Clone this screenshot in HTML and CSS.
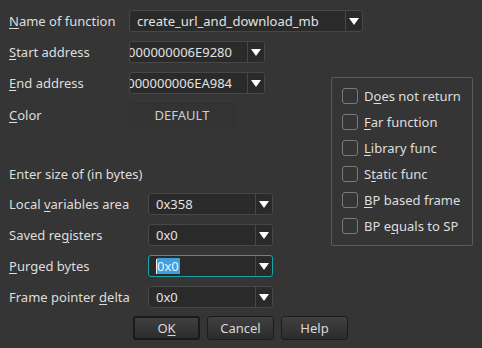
FILE: index.html
```html
<!DOCTYPE html>
<html>
<head>
<meta charset="utf-8">
<link rel="stylesheet" href="styles.css">
</head>
<body>
<div class="dialog">
  <div class="row row-name">
    <div class="label lw-top"><u>N</u>ame of function</div>
    <div class="combo combo-name">
      <div class="combo-text">create_url_and_download_mb</div>
      <div class="combo-arrow"><span class="tri"></span></div>
    </div>
  </div>
  <div class="main">
    <div class="left">
      <div class="row">
        <div class="label lw-top"><u>S</u>tart address</div>
        <div class="combo combo-addr">
          <div class="combo-text right"><span>00000000006E9280</span></div>
          <div class="combo-arrow"><span class="tri"></span></div>
        </div>
      </div>
      <div class="row gap9">
        <div class="label lw-top"><u>E</u>nd address</div>
        <div class="combo combo-addr">
          <div class="combo-text right"><span>00000000006EA984</span></div>
          <div class="combo-arrow"><span class="tri"></span></div>
        </div>
      </div>
      <div class="row gap9 row-color">
        <div class="label lw-top"><u>C</u>olor</div>
        <div class="color-btn">DEFAULT</div>
      </div>
      <div class="row section-title">
        <div class="label">Enter size of (in bytes)</div>
      </div>
      <div class="row gap8">
        <div class="label lw-bot">Local <u>v</u>ariables area</div>
        <div class="combo combo-size">
          <div class="combo-text">0x358</div>
          <div class="combo-arrow"><span class="tri"></span></div>
        </div>
      </div>
      <div class="row gap9">
        <div class="label lw-bot">Saved re<u>g</u>isters</div>
        <div class="combo combo-size">
          <div class="combo-text">0x0</div>
          <div class="combo-arrow"><span class="tri"></span></div>
        </div>
      </div>
      <div class="row gap9">
        <div class="label lw-bot"><u>P</u>urged bytes</div>
        <div class="combo combo-size focused">
          <div class="combo-text"><span class="caret"></span><span class="sel">0x0</span></div>
          <div class="combo-arrow"><span class="tri"></span></div>
        </div>
      </div>
      <div class="row gap9">
        <div class="label lw-bot">Frame pointer <u>d</u>elta</div>
        <div class="combo combo-size">
          <div class="combo-text">0x0</div>
          <div class="combo-arrow"><span class="tri"></span></div>
        </div>
      </div>
      <div class="buttons">
        <div class="btn btn-default">O<u>K</u></div>
        <div class="btn">Cancel</div>
        <div class="btn">Help</div>
      </div>
    </div>
    <div class="group">
      <div class="check"><span class="box"></span><span>D<u>o</u>es not return</span></div>
      <div class="check"><span class="box"></span><span><u>F</u>ar function</span></div>
      <div class="check"><span class="box"></span><span><u>L</u>ibrary func</span></div>
      <div class="check"><span class="box"></span><span>S<u>t</u>atic func</span></div>
      <div class="check"><span class="box"></span><span><u>B</u>P based frame</span></div>
      <div class="check"><span class="box"></span><span>BP e<u>q</u>uals to SP</span></div>
    </div>
  </div>
</div>
</body>
</html>
```
FILE: styles.css
```css
html, body {
  margin: 0;
  padding: 0;
  background: #353535;
}
.dialog {
  width: 482px;
  height: 348px;
  box-sizing: border-box;
  padding: 10px 9px 0 9px;
  background: #353535;
  font-family: "Noto Sans", "Open Sans", sans-serif;
  font-size: 13px;
  color: #dedede;
}
u {
  text-decoration: underline;
  text-underline-offset: 2px;
}
.row {
  display: flex;
  align-items: center;
  height: 22px;
}
.gap9 { margin-top: 9px; }
.gap8 { margin-top: 8px; }
.label { white-space: nowrap; }
.lw-top { width: 120px; flex: none; }
.lw-bot { width: 139px; flex: none; }
.main {
  display: flex;
  margin-top: 9px;
}
.left {
  width: 264px;
  flex: none;
}
.combo {
  display: flex;
  height: 22px;
  box-sizing: border-box;
  border: 1px solid #474747;
  border-radius: 3px;
  background: #2a2a2a;
  flex: none;
}
.combo-name { width: 234px; }
.combo-addr { width: 136px; }
.combo-size { width: 125px; }
.combo-text {
  flex: 1;
  min-width: 0;
  overflow: hidden;
  white-space: nowrap;
  display: flex;
  align-items: center;
  padding-left: 7px;
  color: #e2e2e2;
}
.combo-text.right {
  justify-content: flex-end;
  padding-left: 0;
  padding-right: 15px;
}
.combo-text.right span {
  flex: none;
}
.combo-arrow {
  width: 16px;
  flex: none;
  border-left: 1px solid #474747;
  display: flex;
  align-items: center;
  justify-content: center;
}
.tri {
  width: 0;
  height: 0;
  border-left: 5px solid transparent;
  border-right: 5px solid transparent;
  border-top: 7px solid #ffffff;
  margin-top: 1px;
}
.focused {
  border-color: #17a5a5;
}
.caret {
  width: 1px;
  height: 15px;
  background: #f0f0f0;
  flex: none;
}
.sel {
  background: #3d9fe0;
  color: #eaf4ff;
  line-height: 16px;
  padding-right: 1px;
}
.row-color { height: 24px; }
.color-btn {
  width: 106px;
  height: 24px;
  box-sizing: border-box;
  border: 1px solid #303030;
  border-radius: 2px;
  background: #333333;
  display: flex;
  align-items: center;
  justify-content: center;
  color: #cfcfcf;
}
.section-title { margin-top: 36px; }
.buttons {
  display: flex;
  gap: 7px;
  margin-top: 8px;
  margin-left: 124px;
}
.btn {
  flex: none;
  width: 67px;
  height: 24px;
  box-sizing: border-box;
  border: 1px solid #1c1c1c;
  border-radius: 3px;
  background: linear-gradient(#404040, #2c2c2c);
  display: flex;
  align-items: center;
  justify-content: center;
  color: #d8d8d8;
}
.btn-default {
  border: 2px solid #1a1a1a;
}
.group {
  margin-left: 58px;
  margin-top: 36px;
  width: 142px;
  height: 169px;
  box-sizing: border-box;
  border: 1px solid #5a5a5a;
  border-radius: 2px;
  padding: 10px 0 0 10px;
  display: flex;
  flex-direction: column;
  gap: 10px;
}
.check {
  display: flex;
  align-items: center;
  height: 16px;
  white-space: nowrap;
}
.box {
  width: 16px;
  height: 16px;
  box-sizing: border-box;
  border: 1px solid #7a7a7a;
  border-radius: 3px;
  margin-right: 6px;
  flex: none;
}
```
